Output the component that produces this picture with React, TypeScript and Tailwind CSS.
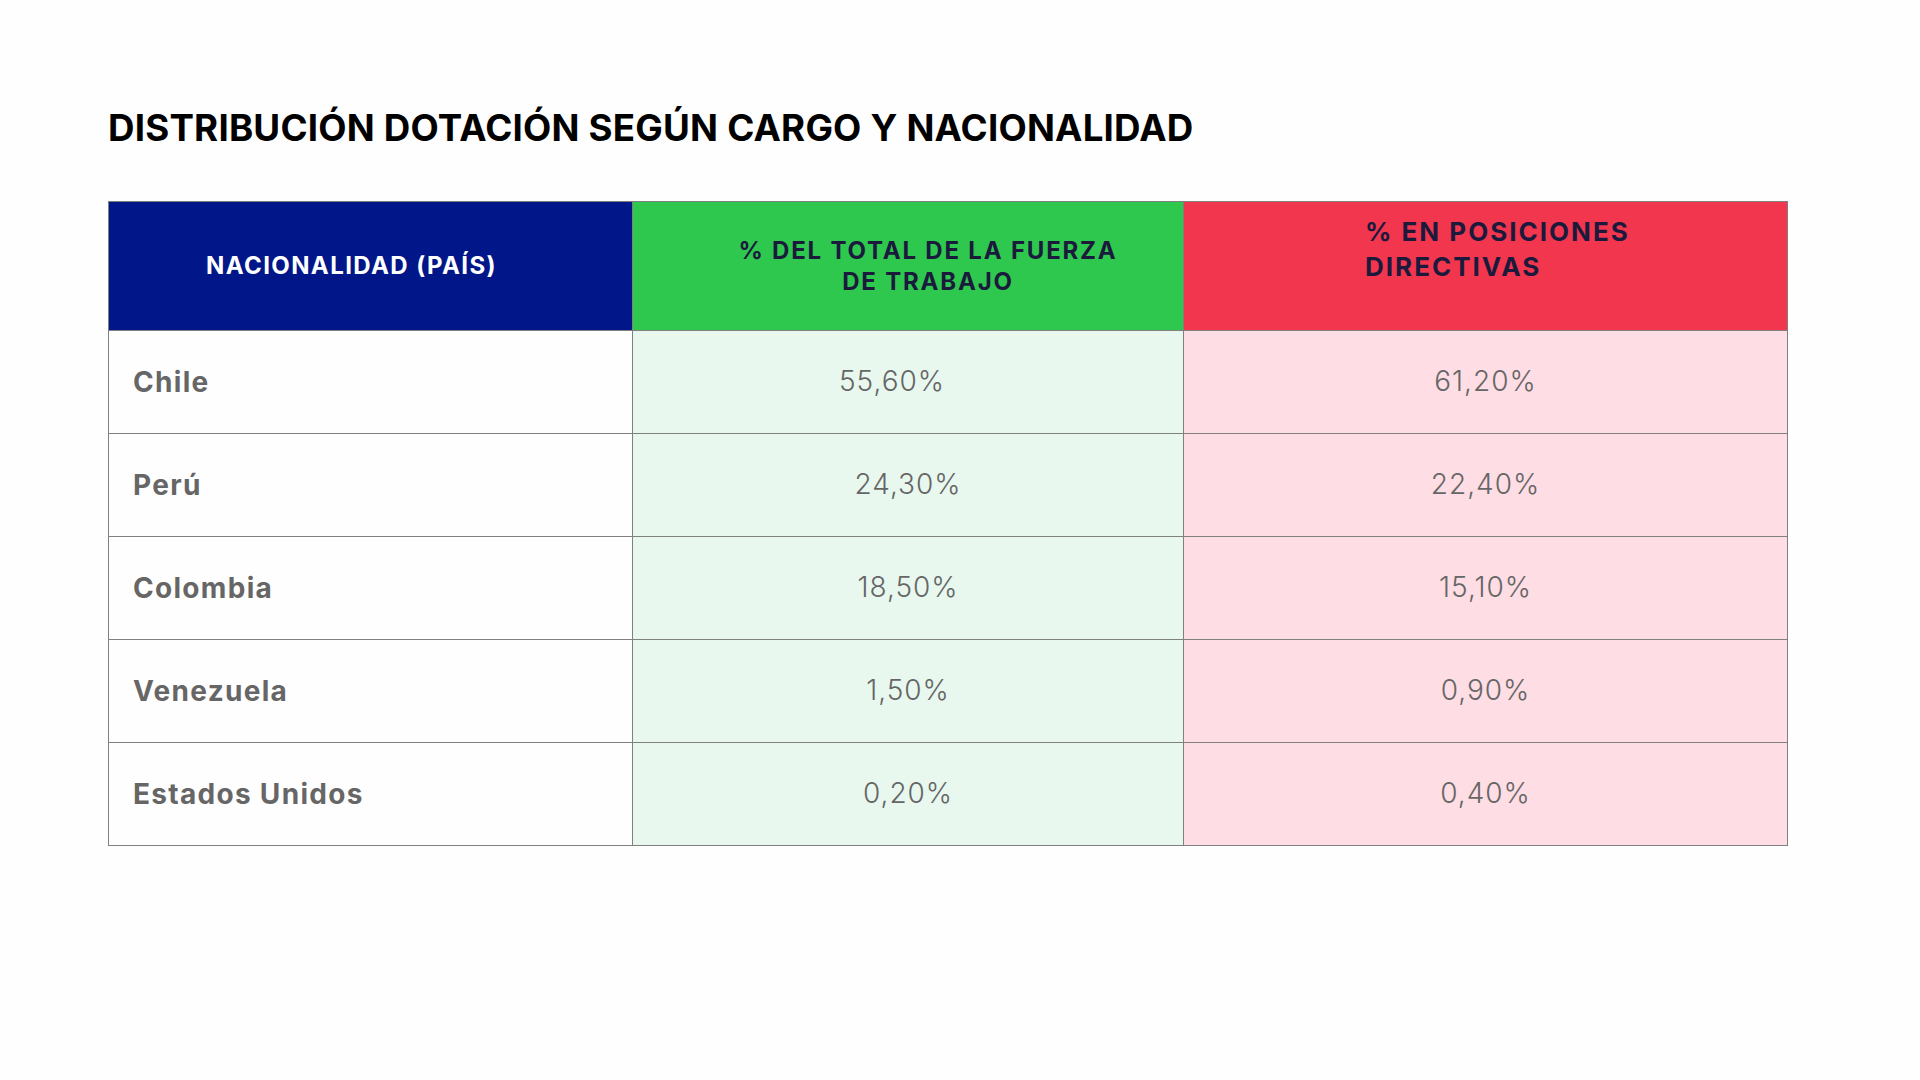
const rows = [
  { pais: "Chile", total: "55,60%", directivas: "61,20%" },
  { pais: "Perú", total: "24,30%", directivas: "22,40%" },
  { pais: "Colombia", total: "18,50%", directivas: "15,10%" },
  { pais: "Venezuela", total: "1,50%", directivas: "0,90%" },
  { pais: "Estados Unidos", total: "0,20%", directivas: "0,40%" },
];

export default function App() {
  return (
    <div className="min-h-screen w-full bg-[#fffefe] font-['Inter','Liberation_Sans',sans-serif]">
      <div className="pl-[108px] pt-[104px]">
        <h1 className="text-[36.7px] font-bold leading-[48px] tracking-[0.2px] text-black">
          DISTRIBUCIÓN DOTACIÓN SEGÚN CARGO Y NACIONALIDAD
        </h1>

        {/* Tabla */}
        <div className="mt-[49px] grid w-[1680px] grid-cols-[524px_551px_604px] border-l border-t border-[#808080]">
          <div className="flex h-[129px] items-center justify-center border-b border-r border-[#808080] bg-[#001689] pr-[38px] text-[24px] font-bold tracking-[1.4px] text-white">
            NACIONALIDAD (PAÍS)
          </div>
          <div className="flex h-[129px] flex-col items-center justify-center border-b border-r border-[#808080] bg-[#2dc84d] pl-[40px] text-center text-[24px] font-bold leading-[31px] tracking-[1.8px] text-[#1b1a3d]">
            <span>% DEL TOTAL DE LA FUERZA</span>
            <span>DE TRABAJO</span>
          </div>
          <div className="flex h-[129px] flex-col border-b border-r border-[#808080] bg-[#f2364d] pl-[181px] pt-[12px] text-[26px] font-bold leading-[35px] tracking-[2px] text-[#1b1a3d]">
            <span>% EN POSICIONES</span>
            <span>DIRECTIVAS</span>
          </div>

          {rows.map((r, i) => (
            <div key={r.pais} className="contents">
              <div className="flex h-[103px] items-center border-b border-r border-[#808080] bg-[#fffefe] pl-[24px] text-[28px] font-bold tracking-[1.3px] text-[#666666]">
                {r.pais}
              </div>
              <div
                className={`flex h-[103px] items-center justify-center border-b border-r border-[#808080] bg-[#e8f8ee] pb-[3px] text-[28px] font-light tracking-[1px] text-[#666666] ${
                  i === 0 ? "pr-[32px]" : ""
                }`}
              >
                {r.total}
              </div>
              <div className="flex h-[103px] items-center justify-center border-b border-r border-[#808080] bg-[#fedde4] pb-[3px] text-[28px] font-light tracking-[1px] text-[#666666]">
                {r.directivas}
              </div>
            </div>
          ))}
        </div>
      </div>
    </div>
  );
}
